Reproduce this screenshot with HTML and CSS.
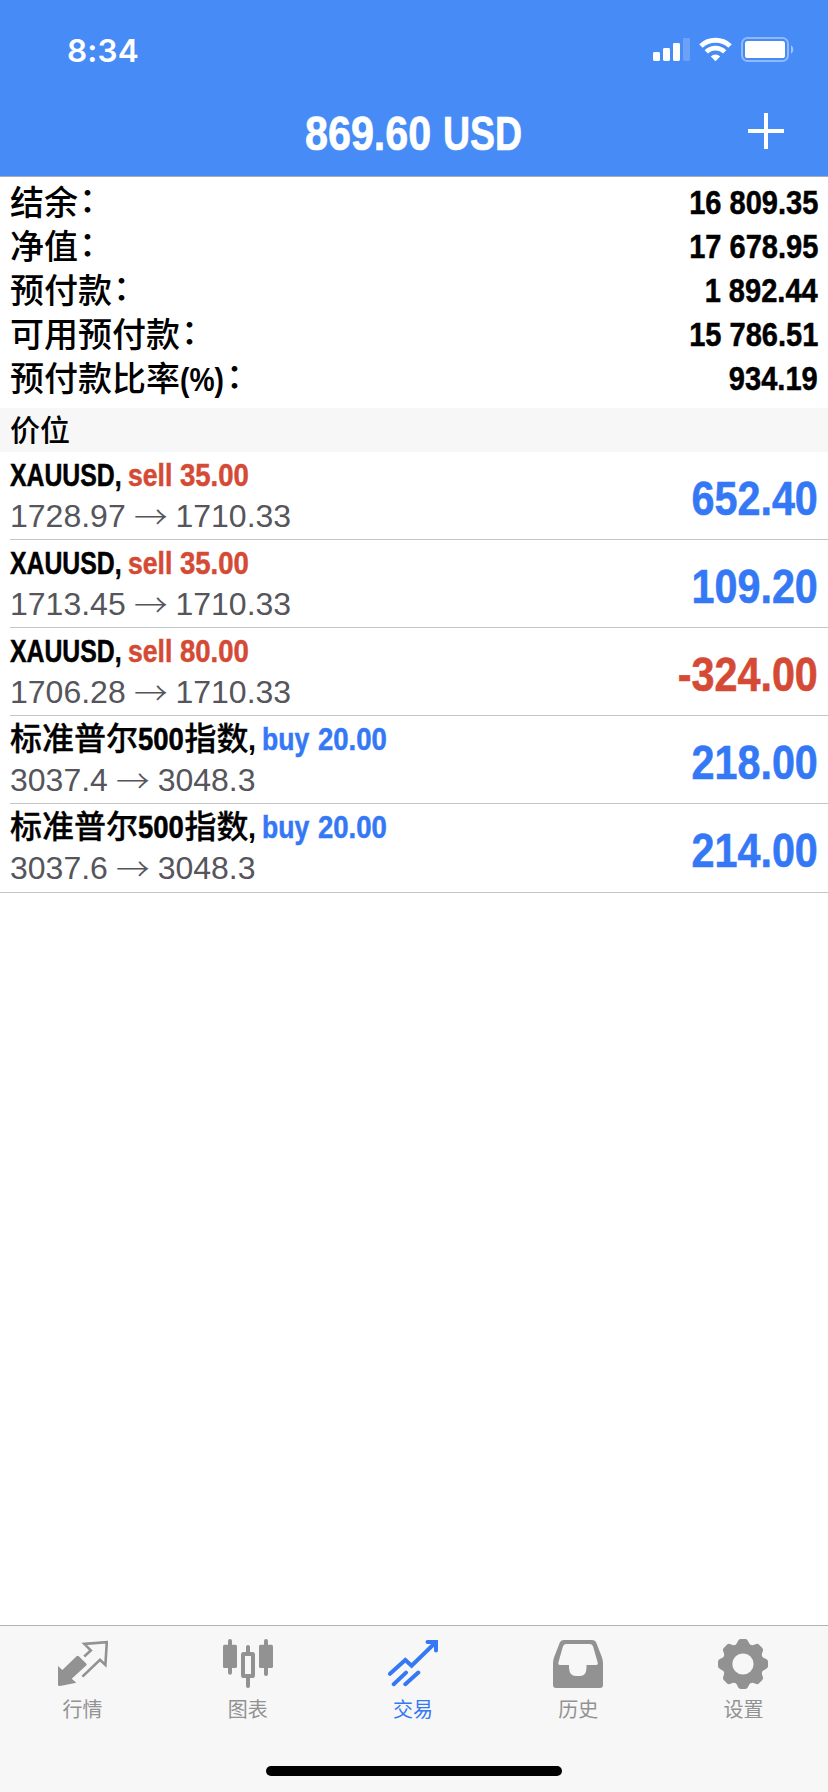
FILE: index.html
```html
<!DOCTYPE html>
<html lang="zh-CN">
<head>
<meta charset="utf-8">
<title>交易</title>
<link rel="stylesheet" href="styles.css">
</head>
<body>
<div class="app">
  <header class="header">
    <div class="status">
      <span class="time">8:34</span>
      <svg class="status-icons" width="144" height="28" viewBox="652 36 144 28" fill="#fff">
        <rect x="653" y="52" width="7" height="9" rx="1.4"/>
        <rect x="663" y="48" width="7" height="13" rx="1.4"/>
        <rect x="673" y="43" width="7" height="18" rx="1.4"/>
        <rect x="683" y="38" width="7" height="23" rx="1.4" opacity=".2"/>
        <path d="M700.9 46A21.4 21.4 0 0 1 730.1 46" fill="none" stroke="#fff" stroke-width="4.9"/>
        <path d="M706.3 51.9A13 13 0 0 1 724.7 51.9" fill="none" stroke="#fff" stroke-width="4.7"/>
        <path d="M715.5 61.2L710.8 56.4A6.7 6.7 0 0 1 720.2 56.4Z"/>
        <rect x="742" y="38" width="46" height="23" rx="5.5" fill="none" stroke="#fff" stroke-width="2" opacity=".4"/>
        <rect x="745" y="41" width="40" height="17" rx="2.6"/>
        <path d="M791 45.3A5 5 0 0 1 791 53.7Z" opacity=".5"/>
      </svg>
    </div>
    <div class="nav">
      <h1 class="title"><span class="title-num">869.60</span><span class="title-unit">USD</span></h1>
      <svg class="plus" width="36" height="36" viewBox="0 0 36 36"><path d="M18 0V36M0 18H36" stroke="#fff" stroke-width="4"/></svg>
    </div>
  </header>

  <section class="summary">
    <div class="line"><span class="label">结余<span class="colon">：</span></span><span class="amount">16 809.35</span></div>
    <div class="line"><span class="label">净值<span class="colon">：</span></span><span class="amount">17 678.95</span></div>
    <div class="line"><span class="label">预付款<span class="colon">：</span></span><span class="amount">1 892.44</span></div>
    <div class="line"><span class="label">可用预付款<span class="colon">：</span></span><span class="amount">15 786.51</span></div>
    <div class="line"><span class="label">预付款比率<span class="percent">(%)</span><span class="colon">：</span></span><span class="amount">934.19</span></div>
  </section>

  <h2 class="section">价位</h2>

  <main class="positions">
    <div class="position">
      <div class="info">
        <div class="deal"><span class="symbol">XAUUSD,</span><span class="side sell">sell</span><span class="volume sell">35.00</span></div>
        <div class="prices">1728.97 <span class="arrow">→</span> 1710.33</div>
      </div>
      <div class="profit up">652.40</div>
    </div>
    <div class="position">
      <div class="info">
        <div class="deal"><span class="symbol">XAUUSD,</span><span class="side sell">sell</span><span class="volume sell">35.00</span></div>
        <div class="prices">1713.45 <span class="arrow">→</span> 1710.33</div>
      </div>
      <div class="profit up">109.20</div>
    </div>
    <div class="position">
      <div class="info">
        <div class="deal"><span class="symbol">XAUUSD,</span><span class="side sell">sell</span><span class="volume sell">80.00</span></div>
        <div class="prices">1706.28 <span class="arrow">→</span> 1710.33</div>
      </div>
      <div class="profit down">-324.00</div>
    </div>
    <div class="position">
      <div class="info">
        <div class="deal"><span class="cjk">标准普尔</span><span class="index">500</span><span class="cjk">指数</span><span class="comma">,</span><span class="side buy">buy</span><span class="volume buy">20.00</span></div>
        <div class="prices">3037.4 <span class="arrow">→</span> 3048.3</div>
      </div>
      <div class="profit up">218.00</div>
    </div>
    <div class="position">
      <div class="info">
        <div class="deal"><span class="cjk">标准普尔</span><span class="index">500</span><span class="cjk">指数</span><span class="comma">,</span><span class="side buy">buy</span><span class="volume buy">20.00</span></div>
        <div class="prices">3037.6 <span class="arrow">→</span> 3048.3</div>
      </div>
      <div class="profit up">214.00</div>
    </div>
  </main>

  <footer class="footer">
    <nav class="tabs">
      <div class="tab">
        <svg width="50" height="52" viewBox="0 0 50 52">
          <path d="M0 28L4.3 32L18.6 18.2Q19.7 17.2 20.8 18.2L28.2 25.6Q29.2 26.6 28.2 27.6L13.7 40.7L18.3 44.7L2 48Q0 48.2 0 46.5Z" fill="currentColor"/>
          <path d="M26.2 18.5L32.8 12.4L26.3 5.9L48.8 4.1L47.4 27L42 21.9L24.4 38.6" fill="none" stroke="currentColor" stroke-width="2.6"/>
        </svg>
        <span class="tab-label">行情</span>
      </div>
      <div class="tab">
        <svg width="50" height="52" viewBox="0 0 50 52" fill="currentColor">
          <rect x="0" y="6.8" width="14" height="23.2" rx="1.6"/><rect x="5" y="1" width="4" height="35.7" rx="2"/>
          <rect x="36" y="6.8" width="14" height="23.2" rx="1.6"/><rect x="41" y="1" width="4" height="37" rx="2"/>
          <rect x="20" y="16" width="10" height="22" rx=".8" fill="none" stroke="currentColor" stroke-width="4"/>
          <rect x="23" y="7" width="4" height="10" rx="2"/><rect x="23" y="38" width="4" height="12" rx="2"/>
        </svg>
        <span class="tab-label">图表</span>
      </div>
      <div class="tab active">
        <svg width="50" height="52" viewBox="0 0 50 52" fill="none" stroke="currentColor" stroke-width="4" stroke-linecap="round">
          <path d="M2 35.8L17.3 22L23.6 27.8L47.5 4.5M39.5 4H48V12.4M5.7 46.2L18 34.6M17.3 46.2L30.3 34.6"/>
        </svg>
        <span class="tab-label">交易</span>
      </div>
      <div class="tab">
        <svg width="50" height="52" viewBox="0 0 50 52" fill="currentColor">
          <path fill-rule="evenodd" d="M11 2H39Q42.2 2 43.4 5L49 19.5Q50 22.5 50 25V47Q50 50 47 50H3Q0 50 0 47V25Q0 22.5 1 19.5L6.6 5Q7.8 2 11 2ZM13.5 6Q10.8 6 10 8.3L5.4 24.5Q4.9 27 7 27H16V30Q16.5 38 23 38H27Q33.2 38 33.5 30V27H43Q45.3 27 44.7 24.5L40 8.3Q39.2 6 36.5 6Z"/>
        </svg>
        <span class="tab-label">历史</span>
      </div>
      <div class="tab">
        <svg width="50" height="52" viewBox="0 0 50 52">
          <defs><path id="tooth" d="M-9 -17.5L-7.5 -19.3Q-6.2 -20 -5.4 -22.2Q-4.4 -25 -2.6 -25H2.6Q4.4 -25 5.4 -22.2Q6.2 -20 7.5 -19.3L9 -17.5Z"/></defs>
          <g transform="translate(25 26)" fill="currentColor">
            <circle r="15.2" fill="none" stroke="currentColor" stroke-width="9.2"/>
            <use href="#tooth"/><use href="#tooth" transform="rotate(45)"/><use href="#tooth" transform="rotate(90)"/><use href="#tooth" transform="rotate(135)"/>
            <use href="#tooth" transform="rotate(180)"/><use href="#tooth" transform="rotate(225)"/><use href="#tooth" transform="rotate(270)"/><use href="#tooth" transform="rotate(315)"/>
          </g>
        </svg>
        <span class="tab-label">设置</span>
      </div>
    </nav>
    <div class="home"></div>
  </footer>
</div>
</body>
</html>
```
FILE: styles.css
```css
* { box-sizing: border-box; }
body {
  margin: 0;
  background: #fff;
  color: #000;
  font-family: "Liberation Sans", "Noto Sans CJK SC", sans-serif;
}
.app { display: flex; flex-direction: column; width: 828px; height: 1792px; }

/* header */
.header { height: 177px; background: #478bf6; border-bottom: 1px solid #a9acb2; color: #fff; }
.status { display: flex; justify-content: space-between; height: 88px; padding: 36px 32px 0 67px; }
.time { font: 600 31.5px/29px Inter, sans-serif; letter-spacing: .2px; }
.nav { display: grid; grid-template-columns: 80px 1fr 80px; height: 88px; }
.title { grid-column: 2; display: flex; justify-content: center; margin: 0; font-size: 48px; line-height: 91px; -webkit-text-stroke: .7px currentColor; }
.title-num, .title-unit, .symbol, .side, .volume, .index, .comma, .percent, .colon, .arrow { display: inline-block; transform-origin: left; }
.title-num { transform: scaleX(.86); margin-right: -9px; }
.title-unit { transform: scaleX(.78); margin-right: -22px; }
.plus { margin: 25px 0 0; }

/* account summary */
.summary { height: 231px; padding: 4px 10px 0 10px; }
.line { display: flex; justify-content: space-between; height: 44px; line-height: 44px; font-size: 34px; font-weight: 500; }
.label { white-space: nowrap; }
.colon { transform: translate(1px, -3px); }
.percent { font-weight: 700; transform: scaleX(.83); margin-right: -8px; }
.amount { font-weight: 700; font-size: 33.6px; transform: scaleX(.865); transform-origin: right; -webkit-text-stroke: .5px currentColor; }

.section { height: 44px; margin: 0; padding: 1px 10px 0; background: #f7f7f7; font-size: 30px; line-height: 44px; font-weight: 500; }

/* open positions */
.positions { flex: 1; }
.position { display: flex; justify-content: space-between; height: 88px; margin-left: 10px; padding-right: 10px; border-bottom: 1px solid #c5c5c7; }
.position:last-child { height: 89px; margin-left: 0; padding-left: 10px; }
.deal { display: flex; padding-top: 2px; height: 44px; font-size: 32px; line-height: 42px; font-weight: 700; }
.cjk { font-weight: 500; -webkit-text-stroke: .3px currentColor; }
.symbol, .side, .volume, .index { -webkit-text-stroke: .5px currentColor; }
.symbol { transform: scaleX(.775); margin-right: -26px; }
.side { transform: scaleX(.83); margin-right: -1px; }
.volume { transform: scaleX(.86); }
.index { transform: scaleX(.86); margin-right: -7px; }
.comma { transform: scaleX(.9); margin-right: 5px; }
.sell, .down { color: #d44a35; }
.buy, .up { color: #3478f6; }
.prices { height: 40px; font-size: 32px; line-height: 40px; color: #55555b; white-space: nowrap; }
.arrow { font-family: "Noto Sans CJK SC", sans-serif; line-height: 0; font-weight: 300; transform: translate(-1px, 1.5px) scaleX(1.05); }
.profit { height: 87px; font-size: 48px; line-height: 93px; font-weight: 700; transform: scaleX(.86); transform-origin: right; -webkit-text-stroke: .6px currentColor; }

/* tab bar */
.footer { height: 167px; background: #f7f7f7; border-top: 1px solid #b2b2b2; }
.tabs { display: grid; grid-template-columns: repeat(5, 1fr); height: 140px; padding: 12px 2px 0 0; color: #929292; }
.tab { display: flex; flex-direction: column; align-items: center; }
.tab-label { margin-top: 5px; font-size: 20px; line-height: 30px; }
.active { color: #3478f6; }
.home { width: 296px; height: 10px; margin: 0 auto; border-radius: 5px; background: #000; }
```
